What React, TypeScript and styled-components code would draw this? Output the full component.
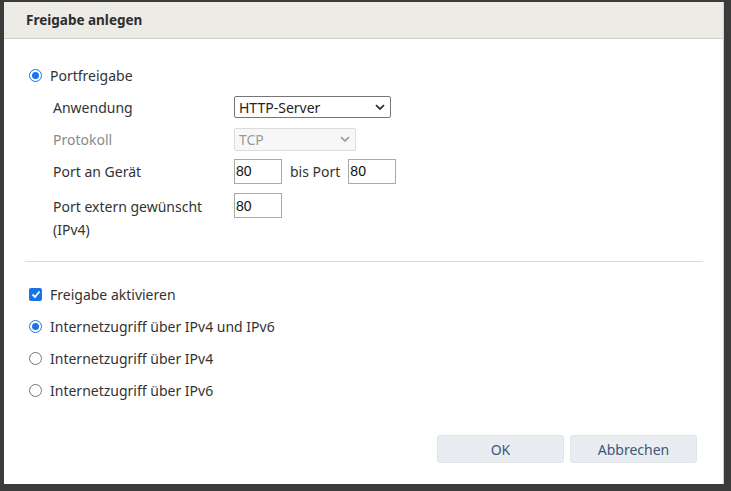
import React from "react";
import styled, { createGlobalStyle } from "styled-components";

const Global = createGlobalStyle`
  html, body { margin: 0; padding: 0; background: #3b3b3b; }
  body { width: 731px; height: 491px; overflow: hidden; font-family: "Noto Sans", "Open Sans", sans-serif; }
`;

const Backdrop = styled.div`
  width: 731px;
  height: 491px;
  box-sizing: border-box;
  padding: 2px 7px 7px 4px;
  background: #3b3b3b;
  display: flex;
`;

const Dialog = styled.div`
  flex: 1;
  background: #fff;
  display: flex;
  flex-direction: column;
  border-right: 1px solid #cfcfcf;
`;

const Header = styled.div`
  height: 36px;
  background: #ecebe6;
  border-bottom: 1px solid #cfcfca;
  display: flex;
  align-items: center;
  padding-left: 22px;
  font-family: "Noto Sans", sans-serif;
  font-weight: 700;
  font-size: 13.5px;
  color: #2d2d2d;
`;

const Body = styled.div`
  flex: 1;
  display: flex;
  flex-direction: column;
  padding: 20px 20px 0 21px;
  font-size: 14px;
  color: #333;
`;

const Choice = styled.label`
  display: flex;
  align-items: center;
  gap: 8px;
  height: 32px;
  padding-left: 4px;
`;

const Radio = styled.span<{ $on?: boolean }>`
  box-sizing: border-box;
  width: 13px;
  height: 13px;
  border-radius: 50%;
  border: 1px solid ${(p) => (p.$on ? "#1a73e8" : "#767676")};
  display: flex;
  align-items: center;
  justify-content: center;
  background: #fff;
  &::after {
    content: "";
    display: ${(p) => (p.$on ? "block" : "none")};
    width: 7px;
    height: 7px;
    border-radius: 50%;
    background: #1a73e8;
  }
`;

const Check = styled.span`
  box-sizing: border-box;
  width: 13px;
  height: 13px;
  border-radius: 2px;
  background: #1a73e8;
  display: flex;
  align-items: center;
  justify-content: center;
`;

const Form = styled.div`
  display: grid;
  grid-template-columns: 181px auto;
  grid-template-rows: 32px 32px 32px auto;
  padding-left: 28px;
  align-items: center;
  justify-items: start;
`;

const Label = styled.div<{ $muted?: boolean; $top?: boolean }>`
  color: ${(p) => (p.$muted ? "#8a8a8a" : "#333")};
  line-height: 23px;
  align-self: ${(p) => (p.$top ? "start" : "center")};
  margin-top: ${(p) => (p.$top ? "7.5px" : "0")};
`;

const Select = styled.div<{ $w: number; $disabled?: boolean }>`
  box-sizing: border-box;
  width: ${(p) => p.$w}px;
  height: ${(p) => (p.$disabled ? 23 : 22)}px;
  border: 1px solid ${(p) => (p.$disabled ? "#dcdcdc" : "#767676")};
  border-radius: 2px;
  background: ${(p) => (p.$disabled ? "#f7f7f7" : "#fff")};
  color: ${(p) => (p.$disabled ? "#9a9a9a" : "#222")};
  display: flex;
  align-items: center;
  justify-content: space-between;
  padding: 0 5px 0 4px;
  font-size: 14px;
`;

const Inputs = styled.div`
  display: flex;
  align-items: center;
  gap: 8px;
`;

const Field = styled.div<{ $top?: boolean }>`
  box-sizing: border-box;
  width: 48px;
  height: 25px;
  border: 1px solid #a9a9a9;
  display: flex;
  align-items: center;
  padding-left: 1px;
  font-family: "Liberation Sans", Arial, sans-serif;
  font-size: 14px;
  color: #111;
  align-self: ${(p) => (p.$top ? "start" : "center")};
  margin-top: ${(p) => (p.$top ? "6px" : "0")};
`;

const Text = styled.span`
  color: #333;
`;

const Divider = styled.div`
  height: 1px;
  background: #d8d8d8;
  margin: 20px 0 17px 0;
`;

const Footer = styled.div`
  display: flex;
  justify-content: flex-end;
  gap: 6px;
  padding: 0 26px 21px 0;
  margin-top: auto;
`;

const Button = styled.button`
  width: 127px;
  height: 28px;
  border: 1px solid #e0e4e8;
  border-radius: 3px;
  background: #e9edf1;
  color: #3d5778;
  font-family: "Noto Sans", sans-serif;
  font-size: 14px;
  padding: 0;
`;

const Chevron = ({ color }: { color: string }) => (
  <svg width="10" height="7" viewBox="0 0 10 7">
    <path d="M1 1.2 L5 5 L9 1.2" fill="none" stroke={color} strokeWidth="1.8" />
  </svg>
);

const CheckMark = () => (
  <svg width="10" height="9" viewBox="0 0 10 9">
    <path d="M1.5 4.5 L4 7 L8.5 1.5" fill="none" stroke="#fff" strokeWidth="1.8" />
  </svg>
);

export default function App() {
  return (
    <>
      <Global />
      <Backdrop>
        <Dialog>
          <Header>Freigabe anlegen</Header>
          <Body>
            <Choice>
              <Radio $on />
              <Text>Portfreigabe</Text>
            </Choice>
            <Form>
              <Label>Anwendung</Label>
              <Select $w={157}>
                <span>HTTP-Server</span>
                <Chevron color="#333" />
              </Select>
              <Label $muted>Protokoll</Label>
              <Select $w={122} $disabled>
                <span>TCP</span>
                <Chevron color="#a0a0a0" />
              </Select>
              <Label>Port an Gerät</Label>
              <Inputs>
                <Field>80</Field>
                <Text>bis Port</Text>
                <Field>80</Field>
              </Inputs>
              <Label $top>
                Port extern gewünscht
                <br />
                (IPv4)
              </Label>
              <Field $top>80</Field>
            </Form>
            <Divider />
            <Choice>
              <Check>
                <CheckMark />
              </Check>
              <Text>Freigabe aktivieren</Text>
            </Choice>
            <Choice>
              <Radio $on />
              <Text>Internetzugriff über IPv4 und IPv6</Text>
            </Choice>
            <Choice>
              <Radio />
              <Text>Internetzugriff über IPv4</Text>
            </Choice>
            <Choice>
              <Radio />
              <Text>Internetzugriff über IPv6</Text>
            </Choice>
          </Body>
          <Footer>
            <Button>OK</Button>
            <Button>Abbrechen</Button>
          </Footer>
        </Dialog>
      </Backdrop>
    </>
  );
}
